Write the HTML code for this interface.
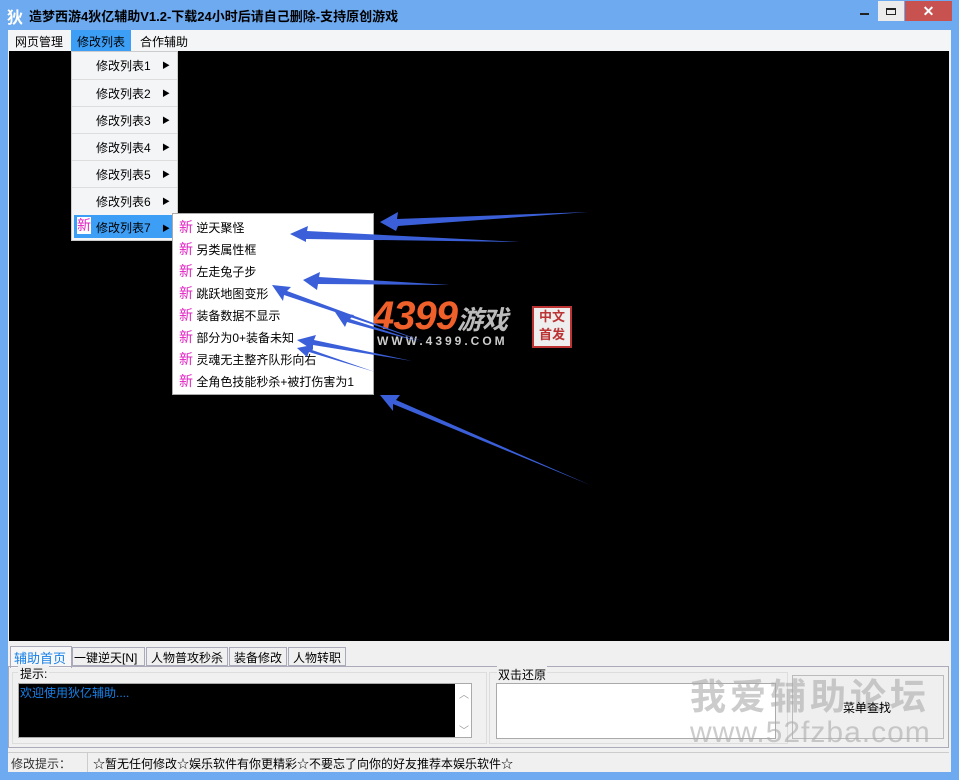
<!DOCTYPE html>
<html><head><meta charset="utf-8"><style>
*{margin:0;padding:0;box-sizing:border-box}
body{width:959px;height:780px;background:#6eaaf0;position:relative;overflow:hidden;font-family:"Liberation Sans","Noto Sans CJK SC",sans-serif;font-size:12px;color:#000}
.abs{position:absolute}
.t{white-space:nowrap}
.sm div{height:22px;line-height:22px;white-space:nowrap;overflow:hidden}
</style></head><body>
<div class="abs t" style="left:7px;top:4px;font-size:16px;color:#fff;font-weight:bold">狄</div>
<div class="abs t" style="left:29px;top:6px;font-size:13px;font-weight:bold;color:#000">造梦西游4狄亿辅助V1.2-下载24小时后请自己删除-支持原创游戏</div>
<div class="abs" style="left:860px;top:13px;width:9px;height:2px;background:#222"></div>
<div class="abs" style="left:878px;top:1px;width:26px;height:20px;background:#ececec"></div>
<div class="abs" style="left:886px;top:8px;width:10px;height:7px;border:1px solid #222;border-top-width:2px"></div>
<div class="abs" style="left:905px;top:1px;width:47px;height:20px;background:#c85250;color:#fff;text-align:center;font-size:14px;line-height:20px;font-weight:bold">✕</div>
<div class="abs" style="left:8px;top:30px;width:943px;height:742px;background:#f0f0f0"></div>
<div class="abs" style="left:8px;top:30px;width:943px;height:21px;background:#f4f5f7"></div>
<div class="abs t" style="left:15px;top:33px;font-size:12px">网页管理</div>
<div class="abs t" style="left:71px;top:30px;width:60px;height:21px;background:#3d9ef6;padding:3px 0 0 6px">修改列表</div>
<div class="abs t" style="left:140px;top:33px">合作辅助</div>
<div class="abs" style="left:9px;top:51px;width:940px;height:590px;background:#000"></div>
<div class="abs t" style="left:372px;top:294px;font-size:40px;font-weight:bold;font-style:italic;color:#f0602a;letter-spacing:-1px">4399<span style="font-size:26px;color:#bbb">游戏</span></div>
<div class="abs t" style="left:377px;top:334px;font-size:12px;font-weight:bold;color:#ccc;letter-spacing:3px">WWW.4399.COM</div>
<div class="abs" style="left:532px;top:306px;width:40px;height:42px;background:#eee;border:2px solid #b33;color:#b33;font-size:13px;line-height:18px;text-align:center;font-weight:bold">中文<br>首发</div>
<div class="abs" style="left:71px;top:51px;width:107px;height:190px;background:#f4f5f7;border:1px solid #ccc"></div>
<div class="abs" style="left:72px;top:52px;width:105px">
<div style="height:27px;position:relative"><span class="abs t" style="left:24px;top:5px">修改列表1</span><span class="abs" style="left:90px;top:8px;font-size:8px">▶</span></div>
<div style="height:27px;position:relative;border-top:1px solid #ddd"><span class="abs t" style="left:24px;top:5px">修改列表2</span><span class="abs" style="left:90px;top:8px;font-size:8px">▶</span></div>
<div style="height:27px;position:relative;border-top:1px solid #ddd"><span class="abs t" style="left:24px;top:5px">修改列表3</span><span class="abs" style="left:90px;top:8px;font-size:8px">▶</span></div>
<div style="height:27px;position:relative;border-top:1px solid #ddd"><span class="abs t" style="left:24px;top:5px">修改列表4</span><span class="abs" style="left:90px;top:8px;font-size:8px">▶</span></div>
<div style="height:27px;position:relative;border-top:1px solid #ddd"><span class="abs t" style="left:24px;top:5px">修改列表5</span><span class="abs" style="left:90px;top:8px;font-size:8px">▶</span></div>
<div style="height:27px;position:relative;border-top:1px solid #ddd"><span class="abs t" style="left:24px;top:5px">修改列表6</span><span class="abs" style="left:90px;top:8px;font-size:8px">▶</span></div>
</div>
<div class="abs" style="left:74px;top:215px;width:100px;height:23px;background:#3d9ef6"></div>
<div class="abs t" style="left:77px;top:217px;background:#fff;color:#e020c0;font-size:14px;line-height:17px">新</div>
<div class="abs t" style="left:96px;top:219px">修改列表7</div>
<div class="abs" style="left:162px;top:223px;font-size:8px">▶</div>
<div class="abs" style="left:172px;top:213px;width:202px;height:182px;background:#fff;border:1px solid #aaa"></div>
<div class="abs sm" style="left:179px;top:216px;width:190px">
<div><span style="color:#e020c0;font-size:14px">新</span> 逆天聚怪</div>
<div><span style="color:#e020c0;font-size:14px">新</span> 另类属性框</div>
<div><span style="color:#e020c0;font-size:14px">新</span> 左走兔子步</div>
<div><span style="color:#e020c0;font-size:14px">新</span> 跳跃地图变形</div>
<div><span style="color:#e020c0;font-size:14px">新</span> 装备数据不显示</div>
<div><span style="color:#e020c0;font-size:14px">新</span> 部分为0+装备未知</div>
<div><span style="color:#e020c0;font-size:14px">新</span> 灵魂无主整齐队形向右</div>
<div><span style="color:#e020c0;font-size:14px">新</span> 全角色技能秒杀+被打伤害为1</div>
</div>
<svg class="abs" style="left:0;top:0" width="959" height="780">
<g fill="#3a5fd8">
<polygon points="380,222 398,212 397,219 588,212 398,226 396,231"/>
<polygon points="290,234 308,226 307,231 520,242 306,239 306,242"/>
<polygon points="303,280 320,272 319,277 450,285 318,284 317,290"/>
<polygon points="272,285 291,287 287,291 425,342 284,295 283,301"/>
<polygon points="335,312 354,315 350,319 420,342 347,322 345,327"/>
<polygon points="297,340 316,335 314,340 412,361 313,345 313,350"/>
<polygon points="297,348 312,345 312,350 375,372 309,352 307,357"/>
<polygon points="380,395 400,395 396,400 590,485 393,404 393,411"/>
</g></svg>
<div class="abs" style="left:10px;top:646px;width:62px;height:22px;background:#f7f7f7;border:1px solid #aab;border-bottom:none"></div>
<div class="abs t" style="left:14px;top:648px;color:#1680e8;font-size:13px">辅助首页</div>
<div class="abs t" style="left:72px;top:647px;width:73px;height:19px;border:1px solid #aab;padding:1px 0 0 1px">一键逆天[N]</div>
<div class="abs t" style="left:146px;top:647px;width:82px;height:19px;border:1px solid #aab;padding:1px 0 0 4px">人物普攻秒杀</div>
<div class="abs t" style="left:229px;top:647px;width:58px;height:19px;border:1px solid #aab;padding:1px 0 0 4px">装备修改</div>
<div class="abs t" style="left:288px;top:647px;width:58px;height:19px;border:1px solid #aab;padding:1px 0 0 4px">人物转职</div>
<div class="abs" style="left:8px;top:666px;width:941px;height:82px;border:1px solid #aab"></div>
<div class="abs" style="left:12px;top:672px;width:475px;height:72px;border:1px solid #ddd"></div>
<div class="abs t" style="left:18px;top:665px;background:#f0f0f0;padding:0 2px">提示:</div>
<div class="abs" style="left:18px;top:683px;width:454px;height:55px;border:1px solid #aaa;background:#fff"></div>
<div class="abs t" style="left:19px;top:684px;width:436px;height:53px;background:#000;color:#1680e8;padding-left:1px">欢迎使用狄亿辅助....</div>
<div class="abs" style="left:459px;top:686px;font-size:10px;color:#999">︿</div>
<div class="abs" style="left:459px;top:722px;font-size:10px;color:#999">﹀</div>
<div class="abs" style="left:489px;top:672px;width:299px;height:72px;border:1px solid #ddd"></div>
<div class="abs t" style="left:497px;top:666px;background:#f0f0f0;padding:0 1px">双击还原</div>
<div class="abs" style="left:496px;top:683px;width:280px;height:56px;background:#fff;border:1px solid #aaa"></div>
<div class="abs" style="left:792px;top:675px;width:152px;height:64px;border:1px solid #bbb;background:#efefef"></div>
<div class="abs t" style="left:690px;top:668px;font-size:36px;font-weight:bold;color:rgba(170,170,170,.6);letter-spacing:4px">我爱辅助论坛</div>
<div class="abs t" style="left:690px;top:716px;font-size:30px;color:rgba(170,170,170,.6);letter-spacing:1px">www.52fzba.com</div>
<div class="abs t" style="left:843px;top:699px">菜单查找</div>
<div class="abs" style="left:8px;top:752px;width:941px;height:1px;background:#ccc"></div>
<div class="abs t" style="left:11px;top:755px;color:#333">修改提示：</div>
<div class="abs" style="left:87px;top:753px;width:1px;height:19px;background:#ccc"></div>
<div class="abs t" style="left:93px;top:755px">☆暂无任何修改☆娱乐软件有你更精彩☆不要忘了向你的好友推荐本娱乐软件☆</div>
</body></html>
